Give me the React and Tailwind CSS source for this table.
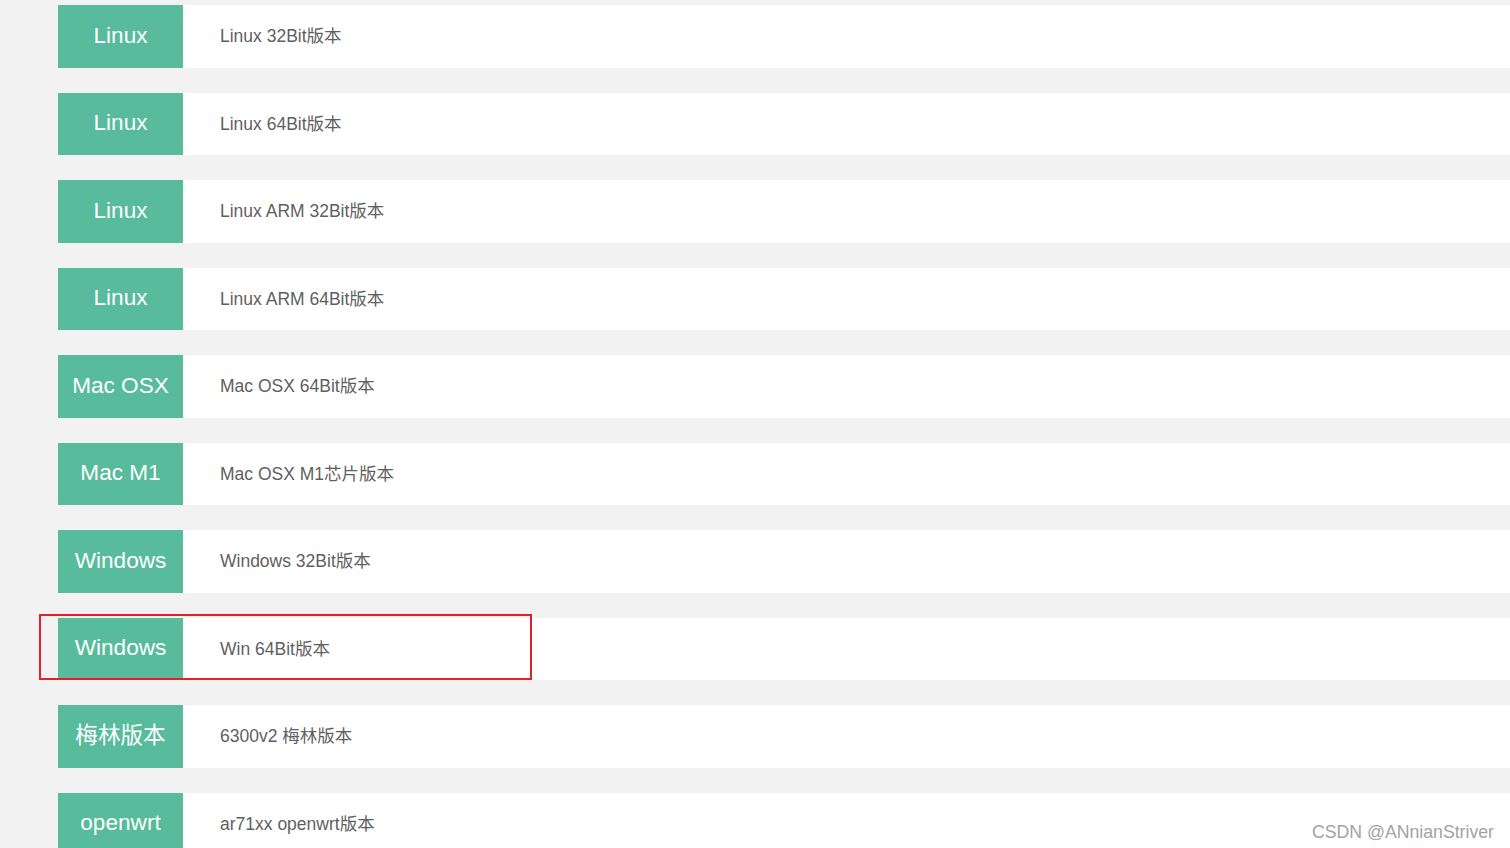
import React from "react";

const rows = [
  ["Linux", "Linux 32Bit版本"],
  ["Linux", "Linux 64Bit版本"],
  ["Linux", "Linux ARM 32Bit版本"],
  ["Linux", "Linux ARM 64Bit版本"],
  ["Mac OSX", "Mac OSX 64Bit版本"],
  ["Mac M1", "Mac OSX M1芯片版本"],
  ["Windows", "Windows 32Bit版本"],
  ["Windows", "Win 64Bit版本"],
  ["梅林版本", "6300v2 梅林版本"],
  ["openwrt", "ar71xx openwrt版本"],
];

export default function App() {
  return (
    <div
      className="relative w-[1510px] h-[848px] overflow-hidden bg-[#f2f2f2]"
      style={{ fontFamily: '"Liberation Sans", Arial, "Noto Sans CJK SC", sans-serif' }}
    >
      <div className="flex flex-col gap-[25px] pt-[5px] pl-[58px]">
        {rows.map(([label, text], i) => (
          <div key={i} className="relative flex h-[62.5px] shrink-0 bg-white">
            <div className="flex w-[125px] shrink-0 items-center justify-center pb-[1px] bg-[#57bb9c] text-[22.6px] text-white">
              {label}
            </div>
            <div className="flex items-center pl-[37px] text-[17.5px] text-[#5f5f5f]">
              {text}
            </div>
          </div>
        ))}
      </div>
      <div className="absolute left-[39px] top-[614px] h-[66px] w-[493px] border-2 border-[#e4202d]" />
      <div className="absolute right-[16px] top-[819px] text-[17.7px] text-[#a3a3a3]">
        CSDN @ANnianStriver
      </div>
    </div>
  );
}
